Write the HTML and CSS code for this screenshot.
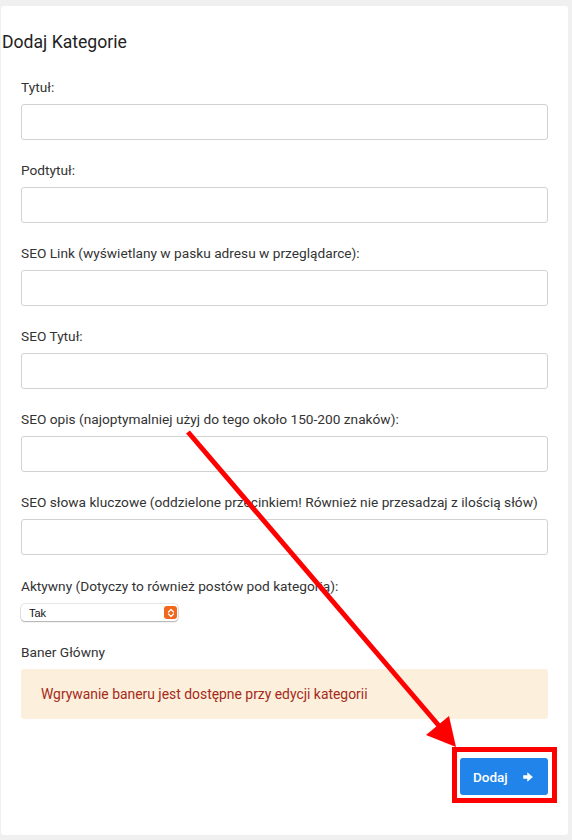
FILE: index.html
```html
<!DOCTYPE html>
<html lang="pl">
<head>
<meta charset="utf-8">
<title>Dodaj Kategorie</title>
<link rel="stylesheet" href="styles.css">
</head>
<body>
<div class="card">
  <h2 class="title">Dodaj Kategorie</h2>
  <form class="form">
    <div class="group">
      <label class="label">Tytuł:</label>
      <input class="input" type="text">
    </div>
    <div class="group">
      <label class="label">Podtytuł:</label>
      <input class="input" type="text">
    </div>
    <div class="group">
      <label class="label">SEO Link (wyświetlany w pasku adresu w przeglądarce):</label>
      <input class="input" type="text">
    </div>
    <div class="group">
      <label class="label">SEO Tytuł:</label>
      <input class="input" type="text">
    </div>
    <div class="group">
      <label class="label">SEO opis (najoptymalniej użyj do tego około 150-200 znaków):</label>
      <input class="input" type="text">
    </div>
    <div class="group">
      <label class="label">SEO słowa kluczowe (oddzielone przecinkiem! Również nie przesadzaj z ilością słów)</label>
      <input class="input" type="text">
    </div>
    <div class="group group-select">
      <label class="label">Aktywny (Dotyczy to również postów pod kategorią):</label>
      <div class="select">
        <span class="select-value">Tak</span>
        <span class="select-btn">
          <svg width="8" height="10" viewBox="0 0 8 10"><path d="M1.5 4 L4 1.5 L6.5 4 M1.5 6 L4 8.5 L6.5 6" fill="none" stroke="#fff" stroke-width="1.3" stroke-linecap="round" stroke-linejoin="round"/></svg>
        </span>
      </div>
    </div>
    <div class="group group-banner">
      <label class="label">Baner Główny</label>
      <div class="alert">Wgrywanie baneru jest dostępne przy edycji kategorii</div>
    </div>
    <div class="actions">
      <button class="btn" type="button">Dodaj
        <svg class="btn-icon" width="10" height="10" viewBox="0 0 10 10"><path d="M0.5 3.6 H4.6 V0.8 L9.5 5 L4.6 9.2 V6.4 H0.5 Z" fill="#fff" stroke="#fff" stroke-width="0.6" stroke-linejoin="round"/></svg>
      </button>
      <span class="highlight"></span>
    </div>
  </form>
</div>
<svg class="annotation" width="572" height="840" viewBox="0 0 572 840">
  <line x1="188" y1="432" x2="440" y2="727" stroke="#ff0000" stroke-width="5"/>
  <polygon points="426,735 449,716 456,747" fill="#ff0000"/>
</svg>
</body>
</html>
```
FILE: styles.css
```css
* { box-sizing: border-box; }
html, body { margin: 0; padding: 0; }
body {
  background: #f0f0f0;
  font-family: Roboto, "Liberation Sans", Arial, sans-serif;
  color: #333;
  width: 572px;
  height: 840px;
  overflow: hidden;
  position: relative;
}
.card {
  margin: 6px 0 0 1px;
  width: 567px;
  height: 829px;
  background: #fff;
  border-radius: 3px;
  padding: 26px 19px 0 0;
}
.title {
  margin: 0;
  padding-left: 1px;
  font-size: 17.6px;
  line-height: 20px;
  font-weight: 400;
  color: #222;
}
.form {
  display: flex;
  flex-direction: column;
  padding: 27px 0 0 20px;
}
.group {
  display: flex;
  flex-direction: column;
  gap: 9px;
  margin-bottom: 22px;
}
.group-select { gap: 10px; margin-bottom: 23px; margin-top: 1px; }
.label {
  font-size: 13.7px;
  line-height: 16px;
  color: #333;
}
.input {
  display: block;
  width: 527px;
  height: 36px;
  border: 1px solid #d2d2d2;
  border-radius: 3px;
  background: #fff;
  margin: 0;
  font: inherit;
}
.select {
  width: 157px;
  height: 17px;
  border-radius: 4px;
  background: #fff;
  box-shadow: 0 0 0 0.5px rgba(0,0,0,0.18), 0 1px 1.5px rgba(0,0,0,0.25);
  display: flex;
  align-items: center;
  justify-content: space-between;
  padding: 0 1px 0 8px;
}
.select-value {
  font-family: "Liberation Sans", Arial, sans-serif;
  font-size: 11px;
  color: #111;
}
.select-btn {
  width: 13px;
  height: 13px;
  background: #f2671d;
  border-radius: 3px;
  display: flex;
  align-items: center;
  justify-content: center;
}
.alert {
  width: 527px;
  height: 50px;
  background: #fcefdb;
  border-radius: 3px;
  color: #a52a1a;
  font-size: 13.9px;
  display: flex;
  align-items: center;
  padding-left: 20px;
}
.actions {
  display: flex;
  justify-content: flex-end;
  width: 527px;
  margin-top: 17px;
  position: relative;
}
.btn {
  width: 88px;
  height: 37px;
  background: #2184ea;
  border: none;
  border-radius: 3px;
  color: #fff;
  font-family: Roboto, "Liberation Sans", Arial, sans-serif;
  font-size: 13.5px;
  font-weight: 500;
  display: flex;
  align-items: center;
  gap: 15px;
  padding: 0 0 0 13px;
}
.btn-icon { display: block; }
.highlight {
  position: absolute;
  right: -9px;
  top: -11px;
  width: 105px;
  height: 56px;
  border: 5px solid #ff0000;
}
.annotation {
  position: absolute;
  left: 0;
  top: 0;
  pointer-events: none;
}
```
